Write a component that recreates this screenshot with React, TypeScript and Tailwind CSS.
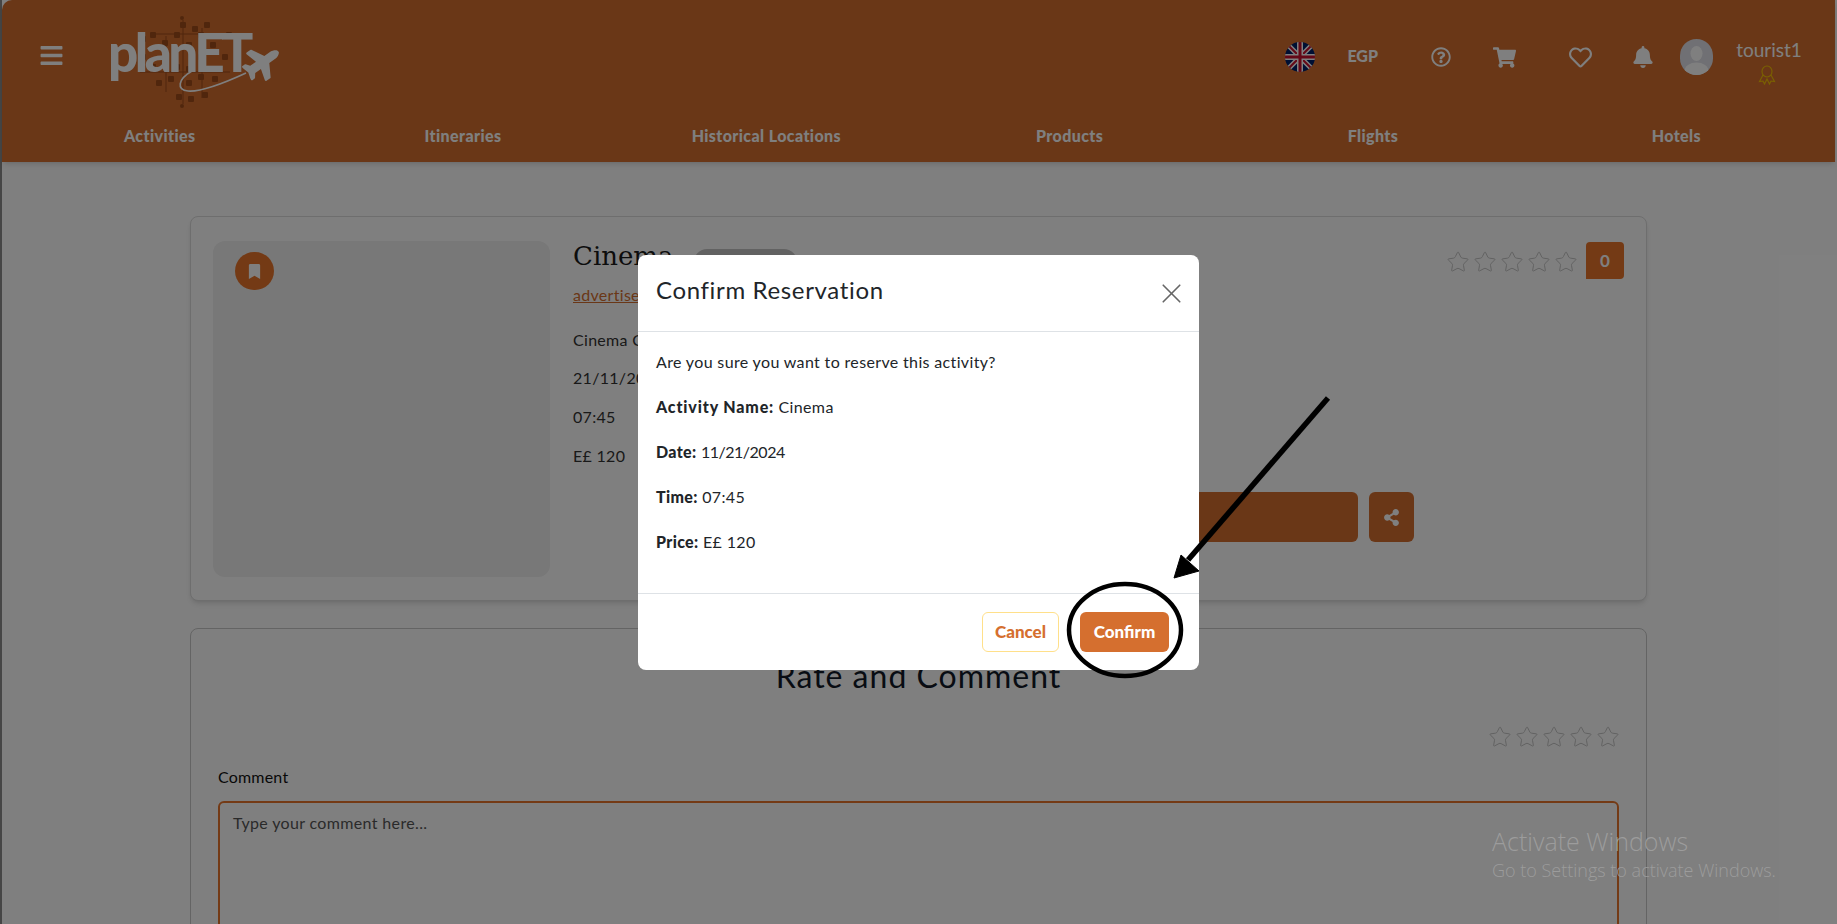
import { FaBars, FaBell, FaBookmark, FaPlane, FaRegHeart, FaRegQuestionCircle, FaShareAlt, FaShoppingCart } from "react-icons/fa";
import { Star, X } from "lucide-react";

const navItems = ["Activities", "Itineraries", "Historical Locations", "Products", "Flights", "Hotels"];

const Stars = ({ size, gap }: { size: number; gap: string }) => (
  <div className={`flex ${gap}`}>
    {[0, 1, 2, 3, 4].map((i) => (
      <Star key={i} size={size} strokeWidth={1} className="text-[#c4c4c4]" />
    ))}
  </div>
);

const Logo = () => (
  <div className="relative w-[175px] h-[84px] ml-[46px]">
    <svg viewBox="0 0 175 95" className="absolute left-0 top-0 w-[175px] h-[95px]">
      <g fill="#a04d1a">
        {[
          [40, 18], [52, 26], [64, 18], [76, 28], [88, 18], [100, 28], [30, 40], [40, 50], [52, 40], [64, 50], [76, 52],
          [88, 40], [100, 52], [112, 40], [46, 66], [58, 62], [76, 66], [88, 60], [102, 62], [70, 8], [82, 12], [94, 8],
          [66, 80], [78, 82], [92, 78], [30, 22], [116, 18],
        ].map(([x, y], i) => (
          <rect key={i} x={x} y={y} width="6" height="6" rx="1" />
        ))}
        <circle cx="72" cy="92" r="2" />
        <circle cx="72" cy="4" r="2" />
      </g>
      <path d="M73 6v84M40 20h70M30 58h90M56 22v56M92 14v70" stroke="#a04d1a" strokeWidth="1" fill="none" />
      <path d="M136 59C110 71 90 78 78 77C66 76 68 65 82 57" stroke="#ffffff" strokeWidth="1.6" fill="none" />
    </svg>
    <span className="absolute left-[-2px] top-[6px] text-[53px] leading-[64px] font-black tracking-[-3.5px] text-white">
      planET
    </span>
    <FaPlane className="absolute left-[133px] top-[29px] text-white rotate-[-35deg]" size={39} />
  </div>
);

const Flag = () => (
  <svg viewBox="0 0 30 30" className="w-[30px] h-[30px] rounded-full">
    <rect width="30" height="30" fill="#012169" />
    <path d="M0 0L30 30M30 0L0 30" stroke="#ffffff" strokeWidth="5" />
    <path d="M0 0L30 30M30 0L0 30" stroke="#c8102e" strokeWidth="2" />
    <path d="M15 0V30M0 15H30" stroke="#ffffff" strokeWidth="6" />
    <path d="M15 0V30M0 15H30" stroke="#c8102e" strokeWidth="3" />
  </svg>
);

const Avatar = () => (
  <svg viewBox="0 0 33 36" className="w-[33px] h-[36px] rounded-full">
    <rect width="33" height="36" fill="#e0e0e8" />
    <ellipse cx="16.5" cy="14.5" rx="6" ry="7.5" fill="#ffffff" />
    <ellipse cx="16.5" cy="32" rx="12" ry="8.5" fill="#ffffff" />
  </svg>
);

const Award = () => (
  <svg viewBox="0 0 18 20" className="w-[18px] h-[20px] mt-[4px] ml-[-5px]" fill="none" stroke="#f5c400" strokeWidth="1.1">
    <ellipse cx="9" cy="6.5" rx="5" ry="5.5" />
    <path d="M5 10L1.5 16.5L5 16L6.5 19L9 14L11.5 19L13 16L16.5 16.5L13 10" />
  </svg>
);

const Header = () => (
  <header className="h-[162px] mr-[2px] bg-[#d56f2f] rounded-tl-[10px] flex flex-col shadow-md relative">
    <div className="h-[126px] shrink-0 flex items-center pl-[37px] text-white">
      <div className="flex items-center mt-[-15px]">
        <FaBars size={25} />
        <Logo />
      </div>
      <div className="ml-auto flex items-center mt-[-12px]">
        <div><Flag /></div>
        <span className="ml-[32px] text-[16px] font-black mt-[-2px]">EGP</span>
        <FaRegQuestionCircle size={20} className="ml-[53px]" />
        <FaShoppingCart size={23} className="ml-[42px]" />
        <FaRegHeart size={23} className="ml-[53px]" />
        <FaBell size={22} className="ml-[40px]" />
        <div className="ml-[26px]"><Avatar /></div>
        <div className="ml-[23px] mr-[33px] w-[66px] flex flex-col items-center mt-[10px]">
          <span className="text-[19px] leading-[22px]">tourist1</span>
          <Award />
        </div>
      </div>
    </div>
    <nav className="grid grid-cols-6 pl-[6px] pr-[7px]">
      {navItems.map((item) => (
        <a key={item} className="text-center text-white text-[16px] leading-[20px] font-black tracking-[0.4px]">
          {item}
        </a>
      ))}
    </nav>
  </header>
);

const ActivityCard = () => (
  <section className="h-[385px] rounded-[8px] border border-[#dcdcdc] shadow-md bg-white pl-[22px] pt-[24px] pr-[22px] flex">
    <div className="w-[337px] h-[336px] rounded-[12px] bg-[#f0f0f0] pl-[22px] pt-[11px] shrink-0">
      <div className="w-[39px] h-[38px] rounded-full bg-[#e8752b] flex items-center justify-center text-white">
        <FaBookmark size={15} />
      </div>
    </div>
    <div className="ml-[23px] flex-1 flex flex-col">
      <div className="flex items-start h-[37px]">
        <h2 className="text-[26px] leading-[30px] font-medium text-[#1b1b1b] [font-family:'DejaVu_Serif',serif]">Cinema</h2>
        <span className="ml-[20px] mt-[8px] w-[103px] h-[26px] rounded-full bg-[#c4c4c4]" />
        <div className="ml-auto flex items-start mt-[1px]">
          <div className="mt-[8px] mr-[8px]"><Stars size={24} gap="gap-[3px]" /></div>
          <div className="w-[38px] h-[37px] rounded-[4px] rounded-bl-none bg-[#e8752b] text-white font-bold text-[17px] flex items-center justify-center">0</div>
        </div>
      </div>
      <a className="mt-[6px] text-[16px] leading-[22px] tracking-[0.3px] text-[#d56f2f] underline">advertiser</a>
      <p className="mt-[23px] text-[16px] leading-[22px] tracking-[0.3px] text-[#333333]">Cinema Cinema</p>
      <p className="mt-[16px] text-[16px] leading-[22px] tracking-[0.3px] text-[#333333]">21/11/2024</p>
      <p className="mt-[17px] text-[16px] leading-[22px] tracking-[0.3px] text-[#333333]">07:45</p>
      <p className="mt-[17px] text-[16px] leading-[22px] tracking-[0.3px] text-[#333333]">E£ 120</p>
      <div className="mt-[25px] flex justify-end gap-[11px] mr-[210px]">
        <button className="w-[560px] h-[50px] rounded-[6px] bg-[#d56f2f]" />
        <button className="w-[45px] h-[50px] rounded-[6px] bg-[#d56f2f] text-white flex items-center justify-center">
          <FaShareAlt size={17} />
        </button>
      </div>
    </div>
  </section>
);

const RateCard = () => (
  <section className="mt-[27px] h-[400px] rounded-[8px] border border-[#c8c8c8] bg-white px-[27px] flex flex-col">
    <h2 className="mt-[27px] text-center text-[32px] leading-[40px] tracking-[1px] text-[#111827]">Rate and Comment</h2>
    <div className="mt-[29px] flex justify-end mr-[-1px]"><Stars size={24} gap="gap-[3px]" /></div>
    <label className="mt-[17px] text-[16px] leading-[22px] tracking-[0.2px] text-[#111111]">Comment</label>
    <textarea
      placeholder="Type your comment here..."
      className="mt-[13px] h-[200px] rounded-[6px] border-2 border-[#e8752b] pl-[13px] pr-[14px] pt-[9px] pb-[10px] text-[16px] leading-[22px] tracking-[0.35px] placeholder:text-[#555555]"
    />
  </section>
);

const Modal = () => (
  <div className="absolute left-[638px] top-[255px] w-[561px] h-[415px] rounded-[8px] bg-white text-[#212529] flex flex-col">
    <div className="h-[77px] shrink-0 border-b border-[#dee2e6] pl-[18px] pr-[11px] flex items-center justify-between">
      <h5 className="text-[24px] leading-[30px] tracking-[0.65px] mt-[-7px]">Confirm Reservation</h5>
      <X size={33} strokeWidth={1.2} className="text-[#666666]" />
    </div>
    <div className="flex-1 pl-[18px] pt-[19px] text-[16px] leading-[22px] tracking-[0.35px] flex flex-col gap-[23px]">
      <p>Are you sure you want to reserve this activity?</p>
      <p><b className="font-black tracking-[0.85px]">Activity Name:</b> Cinema</p>
      <p><b className="font-black">Date:</b> <span className="tracking-[-0.5px]">11/21/2024</span></p>
      <p><b className="font-black">Time:</b> 07:45</p>
      <p><b className="font-black">Price:</b> E£ 120</p>
    </div>
    <div className="h-[77px] shrink-0 border-t border-[#dee2e6] flex items-center justify-end gap-[21px] pr-[30px] text-[17px] font-black">
      <button className="w-[77px] h-[40px] rounded-[6px] border border-[#ffe08a] text-[#d56f2f]">Cancel</button>
      <button className="w-[89px] h-[40px] rounded-[6px] bg-[#d56f2f] text-white">Confirm</button>
    </div>
  </div>
);

export default function App() {
  return (
    <div className="relative w-[1837px] h-[924px] overflow-hidden bg-[#8c8c8c] [font-family:'Lato',sans-serif]">
      <div className="bg-white h-full ml-[2px]">
        <Header />
        <main className="ml-[188px] w-[1457px] pt-[54px]">
          <ActivityCard />
          <RateCard />
        </main>
      </div>
      <div className="absolute inset-0 bg-black/50" />
      <Modal />
      <svg className="absolute left-0 top-0 w-[1837px] h-[924px] pointer-events-none" viewBox="0 0 1837 924">
        <path d="M1328 398L1188 560" stroke="#000000" strokeWidth="5.5" fill="none" />
        <path d="M1174 578L1181 555L1199 571Z" fill="#000000" stroke="#000000" strokeWidth="1" />
        <ellipse cx="1125" cy="630" rx="56" ry="46" stroke="#000000" strokeWidth="4.5" fill="none" />
      </svg>
      <div className="absolute left-[1492px] top-[825px] text-[25px] leading-[32px] text-[#9c9c9c] [font-family:'Open_Sans',sans-serif] font-light">
        <p>Activate Windows</p>
        <p className="text-[18px] leading-[24px] mt-[1px]">Go to Settings to activate Windows.</p>
      </div>
    </div>
  );
}
